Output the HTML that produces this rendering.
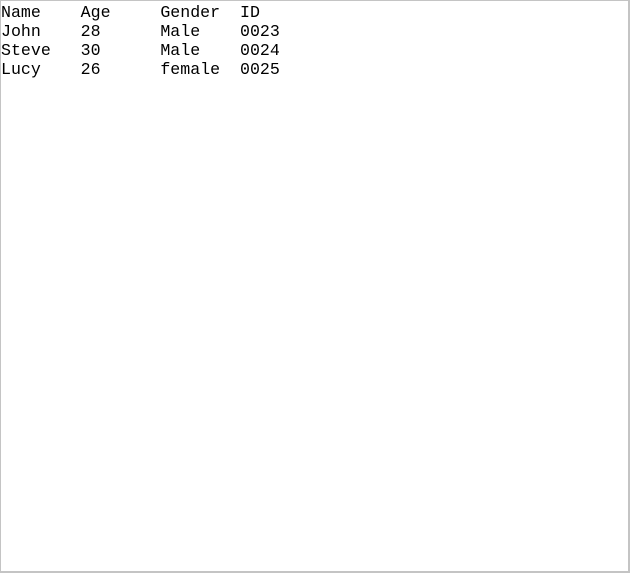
<!DOCTYPE html>
<html><head><style>
html,body{margin:0;padding:0;background:#fff;width:631px;height:574px;overflow:hidden}
.box{position:absolute;left:0;top:0;width:630px;height:573px;box-sizing:border-box;border:1px solid #c4c4c4;border-right-width:2px;border-bottom-width:2px}
.t{position:absolute;left:1px;top:3px;font-family:"Liberation Mono",monospace;font-size:16.6px;line-height:19px;color:#000;white-space:pre;margin:0}
</style></head><body>
<div class="box"></div>
<pre class="t">Name    Age     Gender  ID
John    28      Male    0023
Steve   30      Male    0024
Lucy    26      female  0025</pre>
</body></html>
